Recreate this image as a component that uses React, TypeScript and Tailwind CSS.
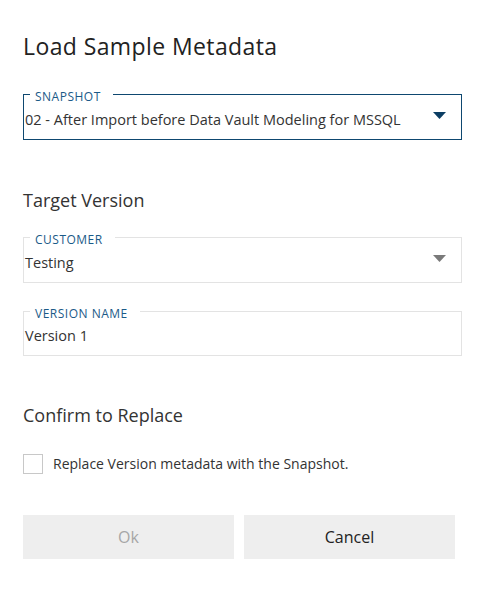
import { useState } from "react";

function Caret({ color }: { color: string }) {
  return (
    <svg width="13" height="7" viewBox="0 0 13 7" className="shrink-0">
      <path d="M0 0 H13 L6.5 7 Z" fill={color} />
    </svg>
  );
}

function Field({
  label,
  value,
  active,
  caret,
  height,
}: {
  label: string;
  value: string;
  active?: boolean;
  caret?: boolean;
  height: string;
}) {
  return (
    <div
      className={`relative flex items-end justify-between border pl-[1px] pr-[15px] ${height} ${
        active ? "border-[#0e4870]" : "border-[#e3e3e3]"
      }`}
    >
      <span className="absolute left-[6px] top-[-5px] bg-white pl-[5px] pr-[12px] text-[12px] leading-[14px] tracking-[0.5px] text-[#1b5a88]">
        {label}
      </span>
      <span className="pb-[9px] text-[14.5px] leading-[20px] text-[#333]">{value}</span>
      {caret && (
        <span className="mb-[20px]">
          <Caret color={active ? "#0b3d63" : "#7a7a7a"} />
        </span>
      )}
    </div>
  );
}

export default function App() {
  const [checked, setChecked] = useState(false);

  return (
    <div
      className="min-h-[598px] w-[484px] bg-white pl-[23px] pr-[22px] pt-[32px]"
      style={{ fontFamily: '"Open Sans", "Noto Sans", sans-serif' }}
    >
      <h1 className="h-[28px] text-[23px] leading-[28px] tracking-[0.4px] text-[#222]">Load Sample Metadata</h1>

      <div className="mt-[34px]">
        <Field
          label="SNAPSHOT"
          value="02 - After Import before Data Vault Modeling for MSSQL"
          active
          caret
          height="h-[46px]"
        />
      </div>

      <h2 className="mt-[48px] text-[18px] leading-[24px] text-[#333]">Target Version</h2>

      <div className="mt-[25px] flex flex-col gap-[28px]">
        <Field label="CUSTOMER" value="Testing" caret height="h-[46px]" />
        <Field label="VERSION NAME" value="Version 1" height="h-[45px]" />
      </div>

      <h2 className="mt-[47px] text-[18px] leading-[24px] text-[#333]">Confirm to Replace</h2>

      <label className="mt-[27px] flex cursor-pointer items-center gap-[10px]">
        <input
          type="checkbox"
          checked={checked}
          onChange={(e) => setChecked(e.target.checked)}
          className="sr-only"
        />
        <span className="h-[20px] w-[20px] border border-[#c8c8c8] bg-white" />
        <span className="text-[14px] leading-[20px] text-[#333]">
          Replace Version metadata with the Snapshot.
        </span>
      </label>

      <div className="mt-[41px] flex gap-[10px] pr-[7px]">
        <button
          disabled={!checked}
          className="h-[44px] flex-1 bg-[#eeeeee] text-[16px] text-[#a6a6a6] enabled:text-[#222]"
        >
          Ok
        </button>
        <button className="h-[44px] flex-1 bg-[#eeeeee] text-[16px] font-medium text-[#222]">
          Cancel
        </button>
      </div>
    </div>
  );
}
